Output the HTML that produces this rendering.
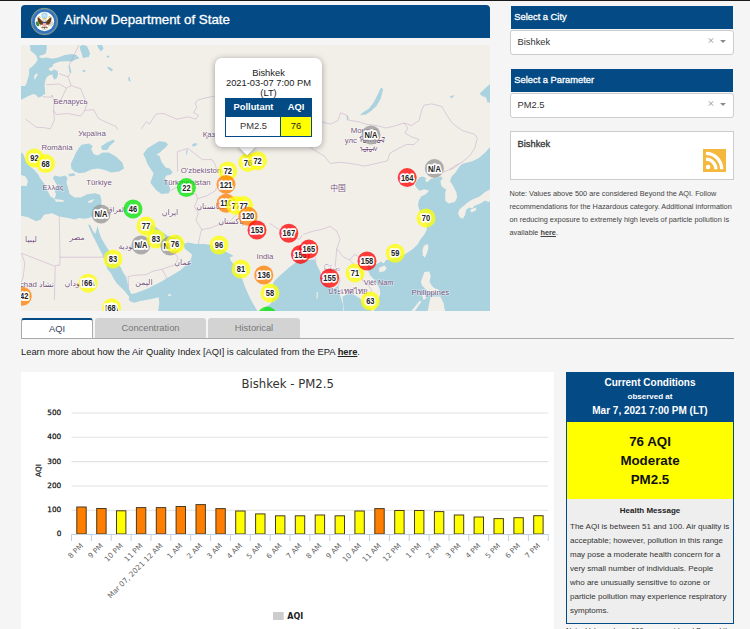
<!DOCTYPE html>
<html><head><meta charset="utf-8"><title>AirNow Department of State</title>
<style>
*{box-sizing:border-box;margin:0;padding:0}
html,body{width:750px;height:629px;overflow:hidden;background:#f5f5f5;font-family:"Liberation Sans",Arial,sans-serif;color:#222}
.abs{position:absolute}
#topline{left:0;top:0;width:750px;height:1px;background:#1a1a1a}
#rightbg{left:508px;top:1px;width:242px;height:360px;background:#f7f7f7}
#hdr{left:21px;top:5px;width:469px;height:33px;background:#044a85;border-radius:4px 4px 0 0}
#hdr .t{left:43px;top:6px;font-size:13.33px;line-height:17px;color:#fff;white-space:nowrap;position:absolute;-webkit-text-stroke:.3px #fff}
#map{left:21px;top:45px;width:469px;height:266px;background:#f2efe9;overflow:hidden}
.sh{left:511px;width:222px;height:23px;background:#044a85;color:#fff;font-size:9.33px;line-height:23px;padding-left:3.3px;-webkit-text-stroke:.3px #fff}
.dd{left:510px;width:223.5px;height:24.5px;background:#fff;border:1px solid #ccc;border-radius:3px;font-size:9.33px;line-height:22px;padding-left:6.5px;color:#333}
.tab{top:318px;height:21px;font-size:9.33px;line-height:20px;text-align:center;color:#777;background:#d3d3d3;border-radius:3px 3px 0 0}
.note{left:509.5px;top:187px;width:230px;font-size:7.33px;line-height:13px;color:#444}
#popup{left:215px;top:58px;width:107px;height:89px;background:#fff;border-radius:7px;box-shadow:0 1px 6px rgba(0,0,0,.35)}
#popup .tx{left:0;width:107px;text-align:center;font-size:9.33px;line-height:9.9px;color:#222;top:10.7px}
#tip{left:241px;top:141px;width:12px;height:12px;background:#fff;transform:rotate(45deg);box-shadow:1px 1px 4px rgba(0,0,0,.3)}
#ptab{left:10px;top:40px;width:87px;height:39px;border:1px solid #044a85;background:#fff}
</style></head><body>
<div class="abs" id="topline"></div>
<div class="abs" id="hdr"><svg class="abs" style="left:9px;top:2px" width="29" height="29" viewBox="-14.5 -14.5 29 29">
<circle r="13.5" fill="#3273bb"/><circle r="13.2" fill="none" stroke="#b9b25e" stroke-width=".7"/><circle r="12.1" fill="none" stroke="#8fb0d8" stroke-width=".5" stroke-dasharray=".8 .8"/>
<circle r="9.7" fill="#fdfdfb"/>
<circle cx="0" cy="-6" r="3.1" fill="#a9d5ec"/><circle cx="0" cy="-6" r="1.6" fill="#c9e6f5"/>
<path d="M-1.2,0.5 C-3,-1 -4.5,-3.5 -6.8,-4.6 C-7.2,-2 -6.6,0.6 -5,2.4 C-4,3.4 -2.6,3.6 -1.4,3 Z" fill="#6a3c14"/>
<path d="M1.2,0.5 C3,-1 4.5,-3.5 6.8,-4.6 C7.2,-2 6.6,0.6 5,2.4 C4,3.4 2.6,3.6 1.4,3 Z" fill="#6a3c14"/>
<path d="M-6.3,-4.8 L-4.6,-5.6 L-3.6,-3.6 Z M6.3,-4.8 L4.6,-5.6 L3.6,-3.6 Z" fill="#d6c04a"/>
<path d="M-1.6,-1.2 Q0,-3.6 1.6,-1.2 L1.2,0.6 L-1.2,0.6 Z" fill="#f3efe6" stroke="#8a6a40" stroke-width=".3"/>
<path d="M-2.6,-2.4 Q0,-3.8 2.6,-2.4" fill="none" stroke="#d6c04a" stroke-width=".7"/>
<rect x="-1.9" y="0.4" width="3.8" height="1.5" fill="#2f4fa0"/>
<path d="M-1.9,1.9 H1.9 V3.6 Q1.9,5 0,5.6 Q-1.9,5 -1.9,3.6 Z" fill="#ee7b7b"/>
<path d="M-1.1,1.9 V5 M-0.3,1.9 V5.5 M0.5,1.9 V5.4 M1.3,1.9 V4.9" stroke="#fff" stroke-width=".35"/>
<path d="M-2,5 L-3.6,6.6 L-1,6 L0,7.4 L1,6 L3.6,6.6 L2,5 Q0,6.4 -2,5Z" fill="#5a3412"/>
<ellipse cx="-7" cy="2.3" rx="1.5" ry="2.6" transform="rotate(-25 -7 2.3)" fill="#3f8a45"/>
<path d="M5.4,4.4 L8.6,0.4 M6.2,4.9 L9,1.6 M4.8,3.6 L7.8,-0.2" stroke="#a9a9a9" stroke-width=".6"/>
<path d="M-3.6,4.6 L-5.2,3.4 M3.6,4.6 L5.2,3.4" stroke="#c9a93a" stroke-width=".8"/>
<path d="M-3.2,7.2 Q0,8.6 3.2,7.2" fill="none" stroke="#c8c8c8" stroke-width=".9"/>
</svg><span class="t">AirNow Department of State</span></div>
<div class="abs" id="map"><svg width="469" height="266" viewBox="21 45 469 266" style="position:absolute;left:0;top:0">
<style>.w{fill:#aad3df}.l{fill:#f2efe9}.b{fill:none;stroke:#b58fbe;stroke-opacity:.55;stroke-width:.7}.cl{fill:#663d70;fill-opacity:.9;text-anchor:middle;font-family:"Liberation Sans","DejaVu Sans","Noto Sans CJK SC",sans-serif;stroke:#fff;stroke-width:1.2;stroke-opacity:.55;paint-order:stroke}.ml{font:bold 7.5px "Liberation Sans",Arial,sans-serif;fill:#222;text-anchor:middle;stroke:#fff;stroke-width:3;stroke-linejoin:round;paint-order:stroke}</style>
<g filter="url(#mb)">
<path class="w" d="M30,44.5 L46.7,44.5 L46.7,49.7 L45.7,53.5 L42.9,55 L40,55.4 L39.1,56.9 L41.9,58.3 L46.7,57.4 L52.4,58.8 L58.1,57.4 L64.8,55 L71.5,54 L76.3,55 L79.6,58.3 L76.3,59.3 L72,61.6 L65.8,61.2 L60.1,61.6 L55.3,63.1 L52.9,64.5 L52.4,66.9 L49.6,67.4 L48.6,69.7 L51.5,71.2 L54.3,69.3 L57.7,71.2 L58.1,74.5 L56.7,78.3 L54.3,79.8 L52.9,76.9 L52.4,74.5 L48.6,75.5 L46.2,77.9 L45,82.1 L44.6,86 L45,90.7 L45.3,93.6 L40.5,96.9 L38.1,97.4 L36.2,95 L33.4,94.1 L28.6,96 L23.8,98.4 L20,100.3 L20,86 L25.2,86 L26.7,83.1 L27.6,79.3 L29.1,74.5 L29.1,68.8 L32.4,66.4 L35.7,63.1 L37.6,59.7 L36.2,55.4 L33.4,53.1 L30.5,50.7Z"/>
<path class="l" d="M34.3,75.5 L37.2,73.1 L37.7,74.5 L35.7,78.3 L34.3,79.8Z"/>
<path class="w" d="M79.6,46.9 L82,44.5 L86.8,46.1 L88.7,49.7 L90.1,53.5 L88.7,56.9 L84.8,57.4 L82.9,58.3 L82,54.5 L80.6,50.7Z"/>
<path class="w" d="M68.6,65.9 L69.8,65.5 L71.5,72.6 L70.4,73.6 L69.1,70.7Z"/>
<path class="w" d="M82.5,70.2 L85.3,69.7 L85.6,71.7 L82.9,72.1Z"/>
<path class="w" d="M96.8,44.8 L102.4,45.3 L103.5,48.8 L100.8,51.5 L98.4,48Z"/>
<path class="w" d="M106.4,56 L109,55.5 L109.4,57.3 L107.2,57.8Z"/>
<path class="w" d="M107.2,66.4 L109.6,67.2 L113.1,69.6 L111.2,71.4 L108,68.8Z"/>
<path class="w" d="M128,77.6 L129.6,77 L130.6,81.6 L128.8,81.3Z"/>
<path class="w" d="M76,152.4 L79.2,147.6 L81.6,144.7 L88.8,143.6 L92.8,146 L91.2,148.9 L93.6,154 L97.6,155.6 L102.4,152.4 L108.8,152.4 L116,156.4 L122.4,162.8 L124,168.4 L119.2,171.6 L111.2,172.4 L104.8,170 L98.4,168.4 L92,169.2 L84.8,172.4 L79.2,173.2 L74.4,171.6 L71.2,168.4 L70.9,163.6 L73.6,158Z"/>
<path class="w" d="M100.8,146.8 L106.4,142.8 L113.6,139.6 L114.7,141.5 L109.6,146 L107.2,150 L102.4,150Z"/>
<path class="w" d="M68,174 L74.4,173.2 L75.2,175.6 L69.6,176.4Z"/>
<path class="w" d="M21,152.4 L23.2,154 L25.6,160.4 L29.6,166 L34.4,170 L38.4,174.8 L40,178 L42.4,181.2 L44.8,184.4 L47.2,190 L50.4,196.4 L54.4,198.8 L56,194.8 L54.4,189.2 L57.6,186.3 L55.2,182 L52.8,178 L54.4,175.6 L60,176.7 L65.6,175.6 L67.5,178 L66.4,182.8 L68,187.6 L69.6,194 L74.4,197.5 L80.8,197.5 L87.2,194.3 L95.2,193.2 L100,194.8 L101.6,200.4 L100.8,206.8 L99.2,213.2 L97.6,219.9 L95.2,213 L92.8,216.4 L88.8,218 L84,218.8 L79.2,218 L74.4,219.6 L68,218 L59.2,216.4 L52,213.2 L44,214.8 L40.8,219.6 L36,221.2 L28,217.2 L20,215.6 L20,186 L24,185.7 L26.4,186.3 L28,181.2 L25.6,176.4 L20,174.5Z"/>
<path class="l" d="M54.4,199.1 L63.2,200.1 L64,201.7 L56,201.8Z"/>
<path class="l" d="M88,201.2 L94.4,199.1 L92,202.3 L88.8,203Z"/>
<path class="w" d="M143.2,154 L147.2,148.4 L153.6,144.4 L159.2,141.2 L165.6,142 L168,144.4 L165.6,147.6 L162.4,150 L160,152.4 L156,154.8 L159.2,155.6 L161.6,162 L165.6,167.6 L169.6,168.4 L172.8,172.4 L170.4,174.8 L166.4,175.6 L164.8,178 L168,182.8 L170.4,189.2 L168.8,193.2 L161.6,194 L156.8,190.8 L152.8,186 L150.4,182.8 L152,178 L153.6,173.2 L150.4,168.4 L147.2,163.6 L145.6,158.8Z"/>
<path class="w" d="M192,144.4 L195.2,143.1 L197.6,144 L195.2,146 L192.8,146.8Z"/>
<path class="w" d="M186.4,150 L187.7,149.2 L187.2,154 L186,154.8Z"/>
<path class="w" d="M382,87.5 L383,90 L380.5,99 L376.5,106 L371,111 L366,114.5 L360,115.3 L362.5,112.8 L368.8,108.8 L373.6,102.4 L378,94 L380.5,88.5Z"/>
<path class="w" d="M449.7,96 L454.8,95.2 L451.6,98.4Z"/>
<path class="w" d="M346.5,115.6 L347.6,115.4 L348,120.6 L347,120.8Z"/>
<path class="w" d="M146.2,222.9 L149,222.5 L152,225 L156.8,227.7 L162,232 L168,236 L172.3,237.4 L175,235.5 L177.6,234.9 L180,238 L183.5,242 L183.5,245 L178.5,241 L176.5,240.7 L173.9,242.9 L170.4,246.2 L165,247 L160,245.5 L157,246 L156.8,243 L158.3,239.4 L156.5,240 L154.1,238.2 L152,234 L149,229 L146.5,226Z"/>
<path class="w" d="M88,224.4 L90.4,225.2 L92.8,230.8 L95.2,234 L96.8,229.2 L97.6,226 L99.2,232.4 L101.6,238.8 L106.4,246.8 L109.6,251.6 L116,262 L120.7,267.3 L123.3,272.7 L126,276.7 L127.3,282 L128.7,288.7 L131.3,294 L135.3,293.3 L140.7,291.3 L147.3,288.7 L154,285.3 L160.7,282 L166,278.7 L172,275.2 L180,270.4 L185.6,265.6 L191.2,258.4 L192,254.4 L188,251.2 L184.8,248.8 L183.2,244 L188,242.4 L196,244 L204,244 L210.4,244.8 L220,247.2 L226.4,252 L231.2,254.4 L233.6,256 L229.6,257.6 L231.2,261.6 L234.4,264.8 L242.4,279.2 L244.7,286 L247.3,292 L250,298 L252.7,303 L255.3,307.5 L258,312 L158,312 L159.3,303.3 L158.7,297.3 L152.7,298.7 L146,300 L139.3,301.3 L134,302.7 L130,301.3 L128.7,299.3 L129.3,296.7 L128,295.3 L124.7,291.3 L120.7,287.3 L116.7,283.3 L114,279.3 L111.3,274 L107.3,268.7 L104,258 L100,250 L96.8,243.6 L93.6,237.2 L90.4,230.8Z"/>
<path class="l" d="M168,294.4 L171.2,294.4 L171.2,295.8 L168,295.8Z"/>
<path class="w" d="M262.7,312 L265.3,307.3 L269.3,304.7 L272,302 L272,290 L273.3,282.7 L275.3,280 L278.7,276.7 L284,272 L289.3,267.3 L294.7,263.3 L300,258 L308,260 L314.4,259.2 L316,262.4 L317.6,266.4 L320,271.2 L321.6,276 L324,282.4 L330.4,287.2 L333.6,288.8 L338.4,285.6 L339.2,290.4 L340,295.2 L341.6,300 L343.2,304.8 L343.5,312Z"/>
<path class="l" d="M316.8,292 L317.9,292 L317.6,298.4 L316.5,298.4Z"/>
<path class="w" d="M344.3,312 L343.2,303.2 L342.4,296.8 L346.4,294.4 L352,293.6 L356,296 L360,298.4 L363.2,302.4 L366.4,306.4 L370.4,308 L372,312Z"/>
<path class="w" d="M491.6,145.2 L485.2,152.4 L478.8,158 L472.4,161.2 L466,162.8 L461.2,164.4 L458,168.4 L455.6,172.4 L451.6,176.4 L450,181.2 L453.2,186 L456.4,192.4 L457.2,197.2 L454.8,202 L448.4,203.6 L445.2,200.4 L445.2,194 L446,189.2 L442.8,187.6 L441.2,185.2 L440.4,181.2 L442.8,178 L440.4,176.4 L435.6,178 L430.8,178.8 L427.6,182 L425.2,181.2 L426,178 L422.8,176.4 L419.6,177.2 L416.4,181.2 L414.8,185.2 L417.2,188.4 L419.6,190.8 L424.4,189.2 L429.2,190.8 L426,194 L421.2,196.4 L418.8,200.4 L418,205.2 L419.6,210 L421.2,214.8 L425.2,219.9 L426.8,221.6 L426.8,229.6 L424.4,234.4 L420.4,239.2 L418,244 L413.2,248.8 L408.4,252 L404.4,254.4 L395.6,258.4 L386,260 L383.6,263.5 L381.2,261.6 L378,263.2 L374.8,264.8 L370,263.2 L366.8,266.4 L368.4,271.2 L370,275.2 L373.2,278.4 L377.2,284 L379.6,288.8 L380.4,293.6 L378.8,298.4 L376.4,306.4 L373.2,312 L491.6,312Z"/>
<path class="l" d="M491.6,188.4 L485.2,192.1 L478.8,196.9 L472.4,199.6 L468.4,202 L464.4,205.2 L459.6,209.2 L458,213.2 L459.6,217.2 L462.8,218.8 L465.2,214.8 L466,210 L469.2,207.6 L472.4,208.4 L474,206 L480.4,203.6 L485.2,200.4 L488.4,202 L491.6,200.4Z"/>
<path class="l" d="M470,210 L475.6,207.6 L476.4,210 L471.6,212.4Z"/>
<path class="l" d="M378.8,268 L384.4,265.6 L386.8,268 L384.4,271.2 L379.6,272.2Z"/>
<path class="l" d="M425.2,244.8 L427.9,244.3 L428.4,248 L426.8,253.6 L424.7,257.8 L422.8,255.2 L422.5,250.4 L423.6,246.4Z"/>
<path class="l" d="M424.4,272 L429.2,271.5 L430.8,276 L429.5,281.6 L431.6,285.6 L434,288 L438,289.6 L440.4,292 L438,293.6 L433.2,292 L428.4,291.2 L425.2,288.8 L422,285.6 L420.9,281.6 L422.5,277.6Z"/>
<path class="l" d="M430.8,296.8 L440.4,296.5 L443.6,303.2 L445.2,312 L427.6,312 L429.2,303.2Z"/>
<path class="l" d="M422,295.2 L425.2,294.4 L426,298.4 L423.6,300Z"/>
<path class="l" d="M419.6,300.8 L421.5,301.6 L415.6,309.9 L413.2,312 L410.8,312Z"/>
<path class="w" d="M491,83 L479.6,93.6 L482,96 L486,97.6 L487.6,102.4 L491,102.4Z"/>
<path class="b" d="M141.3,128.8 L146.4,121.6 L149.6,124 L156,113.9 L164,113.6 L176.8,119.2 L188,116.8 L196,119.2 L198.4,115.2 L193.6,112.8 L196.8,107.2 L195.2,103.2 L197.6,100 L207.2,97.6 L214.9,96"/>
<path class="b" d="M442.8,172.4 L448.4,170 L453.2,168.4 L458.8,164.4"/>
<path class="b" d="M79.2,44.8 L75.2,52.8 L71.2,60.8 L68.8,66.4"/>
<path class="b" d="M69.9,73.6 L68,76.8 L59.2,73.6"/>
<path class="b" d="M68,76.8 L71.2,85.6 L66.4,88 L59.2,84 L46.4,84.8"/>
<path class="b" d="M71.2,85.6 L80.8,88.8 L83.2,95.2 L87.2,103.2 L84.8,110.4 L93.6,109.6 L98.4,118.4 L106.4,122.4 L116,126.4 L117.6,129.9"/>
<path class="b" d="M66.4,88 L63.2,95.2 L60.8,100 L54.4,101.6 L53.6,110.4 L56,114.4 L68,113.6 L80.8,116 L84.8,110.4"/>
<path class="b" d="M42.4,96.8 L51.2,97.1 L52,95.2 L54.4,101.6"/>
<path class="b" d="M53.6,110.4 L54.4,120 L50.4,128.8"/>
<path class="b" d="M25.6,119.2 L31.2,123.2 L36,127.2 L44,127.7 L50.4,128.8"/>
<path class="b" d="M59.2,216.4 L60,257.2 L104.8,257.2"/>
<path class="b" d="M60,257.2 L59.7,265.2 L55.2,265.5 L54.4,299.9"/>
<path class="b" d="M21.3,253.2 L54.4,266"/>
<path class="b" d="M21.3,253.2 L24.8,262.8 L23.2,277.2 L21.3,282"/>
<path class="b" d="M128.7,288.7 L128,276.7 L134,275.3 L146,274.7 L152.7,271.3 L162,269.3 L167.3,278.7"/>
<path class="b" d="M162,269.3 L175.3,264.7 L178,258 L175.3,254"/>
<path class="b" d="M177.6,171.6 L177.3,151.6 L188,148.4 L202.4,159.6 L212,159.6 L215.2,164.4 L216.8,170 L220,170.8"/>
<path class="b" d="M170.4,190.8 L177.6,186.8 L188,193.2 L196,194 L197.6,198.8 L207.2,195.6 L215.2,190.8 L216.8,187.6"/>
<path class="b" d="M197.6,198.8 L194.4,206.8 L198.4,213.2 L196,219.9"/>
<path class="b" d="M196,220 L201.6,229.6 L199.2,239.2 L198.4,244"/>
<path class="b" d="M201.6,229.6 L210.4,228 L218.4,224.8 L229.6,221.6 L236,215.2"/>
<path class="b" d="M269.6,223.2 L279.2,229.6 L290.4,237.6 L300,239.2 L301.9,235.2"/>
<path class="b" d="M303.2,234.4 L312.8,231.2 L320.8,229.6 L330.4,226.4 L336.8,231.2 L340,239.2 L336.8,248.8 L343.2,256.8 L349.6,260 L354.4,254.4 L359.2,256.8"/>
<path class="b" d="M316,262.4 L315.2,256.8 L312.8,253.6 L316,248.8 L311.2,245.6 L308,244 L303.2,242.4"/>
<path class="b" d="M336.8,248.8 L335.2,266.4 L336.8,271.2 L340,280.8 L338.4,285.6"/>
<path class="b" d="M349.6,260 L356,266.4 L362.4,272.8 L362.4,280.8 L367.2,284 L372,290.4 L368.8,295.2"/>
<path class="b" d="M310.1,121.7 L321.5,121.7 L330.4,124.2 L338,120.4 L340.5,112.8 L346.9,115.3 L349.4,120.4 L358.3,121.7 L365.9,124.2 L376,125.5 L386.1,128 L396.3,125.5 L403.9,122.9 L411.5,125.5 L419.1,120.4 L421.6,110.3 L424.1,105.2 L431.7,103.9 L441.9,106.5 L446.9,115.3 L452,122.9 L462.1,130.5 L474.8,134.3 L477.3,138.1 L474.8,148.3 L469.7,155.9 L462.1,162.2 L454.5,166 L449.5,169.8"/>
<path class="b" d="M403.9,122.9 L407.7,128 L405.1,133.1 L411.5,136.9 L419.1,139.4 L414,144.5 L406.4,144.5 L398.8,148.3 L389.9,153.3 L387.4,160.9 L376,163.5 L364.6,166 L350.7,163.5 L339.3,162.2 L330.4,163.5 L324.1,155.9 L315.2,150.8 L310.1,147 L302.5,144.5 L294.9,138.1 L289.9,128"/>
<path class="b" d="M310.1,121.7 L302.5,116.6 L292.4,114.1 L284.8,117.9 L274.7,116.6"/>
</g>
<defs><filter id="mb" x="0" y="0" width="100%" height="100%"><feGaussianBlur stdDeviation="0.35"/></filter></defs>
<text class="cl" x="70.5" y="103.5" font-size="7.8">Беларусь</text>
<text class="cl" x="92" y="135.5" font-size="7.8">Україна</text>
<text class="cl" x="57" y="150" font-size="7.8">România</text>
<text class="cl" x="53" y="190" font-size="7.8">Ελλάς</text>
<text class="cl" x="99" y="185" font-size="7.8">Türkiye</text>
<text class="cl" x="209" y="137" font-size="7.8">Қаз</text>
<text class="cl" x="201" y="173" font-size="7.8">O'zbekiston</text>
<text class="cl" x="187" y="184.5" font-size="7.8">Türkmenistan</text>
<text class="cl" x="170" y="215" font-size="7.8">ایران</text>
<text class="cl" x="77" y="240" font-size="7.8">مصر</text>
<text class="cl" x="31" y="242" font-size="7.8">ليبيا</text>
<text class="cl" x="133" y="249" font-size="7.8">السعودية</text>
<text class="cl" x="183" y="265" font-size="7.8">عمان</text>
<text class="cl" x="144" y="285" font-size="7.8">اليمن</text>
<text class="cl" x="35" y="287" font-size="7.8">Tchad تشاد</text>
<text class="cl" x="78" y="286" font-size="7.8">السودان</text>
<text class="cl" x="212" y="209" font-size="7.8">افغانستان</text>
<text class="cl" x="231" y="224" font-size="7.8">پاکستان</text>
<text class="cl" x="116.4" y="212" font-size="7">العراق</text>
<text class="cl" x="265" y="258.5" font-size="7.8">India</text>
<text class="cl" x="338" y="191" font-size="7.8">中国</text>
<text class="cl" x="364" y="133" font-size="7.8">Монгол</text>
<text class="cl" x="365" y="143" font-size="7.8">улс ᠮᠣᠩᠭᠣᠯ</text>
<text class="cl" x="369" y="152" font-size="6.5">ᠤᠯᠤᠰ</text>
<text class="cl" x="378.5" y="285" font-size="7.2">Việt Nam</text>
<text class="cl" x="348" y="294" font-size="7.8">ประเทศไทย</text>
<text class="cl" x="430.3" y="295" font-size="7.8">Philippines</text>
<text class="cl" x="332" y="271" font-size="7">မြန်မာ</text>
<circle cx="34.4" cy="158" r="9.5" fill="#ffff00" fill-opacity=".75"/>
<text class="ml" transform="translate(34.4,161.1) scale(1,1.16)">92</text>
<circle cx="45.6" cy="163.6" r="9.5" fill="#ffff00" fill-opacity=".75"/>
<text class="ml" transform="translate(45.6,166.7) scale(1,1.16)">68</text>
<circle cx="101" cy="214" r="9.5" fill="#969696" fill-opacity=".75"/>
<text class="ml" transform="translate(101,217.1) scale(1,1.16)">N/A</text>
<circle cx="133" cy="209" r="9.5" fill="#00e400" fill-opacity=".75"/>
<text class="ml" transform="translate(133,212.1) scale(1,1.16)">46</text>
<circle cx="146" cy="226" r="9.5" fill="#ffff00" fill-opacity=".75"/>
<text class="ml" transform="translate(146,229.1) scale(1,1.16)">77</text>
<circle cx="141" cy="245" r="9.5" fill="#969696" fill-opacity=".75"/>
<text class="ml" transform="translate(141,248.1) scale(1,1.16)">N/A</text>
<circle cx="156" cy="239" r="9.5" fill="#ffff00" fill-opacity=".75"/>
<text class="ml" transform="translate(156,242.1) scale(1,1.16)">83</text>
<circle cx="170" cy="246" r="9.5" fill="#969696" fill-opacity=".75"/>
<text class="ml" transform="translate(170,249.1) scale(1,1.16)">N/A</text>
<circle cx="175" cy="244" r="9.5" fill="#ffff00" fill-opacity=".75"/>
<text class="ml" transform="translate(175,247.1) scale(1,1.16)">76</text>
<circle cx="113" cy="259" r="9.5" fill="#ffff00" fill-opacity=".75"/>
<text class="ml" transform="translate(113,262.1) scale(1,1.16)">83</text>
<circle cx="88.2" cy="283.2" r="9.5" fill="#ffff00" fill-opacity=".75"/>
<text class="ml" transform="translate(88.2,286.3) scale(1,1.16)">N/A</text>
<text class="ml" transform="translate(88.2,286.3) scale(1,1.16)">66</text>
<circle cx="22.2" cy="296.3" r="9.5" fill="#ff7e00" fill-opacity=".75"/>
<text class="ml" transform="translate(22.2,299.40000000000003) scale(1,1.16)">142</text>
<circle cx="111.6" cy="307.7" r="9.5" fill="#ffff00" fill-opacity=".75"/>
<text class="ml" transform="translate(111.6,310.8) scale(1,1.16)">N/A</text>
<text class="ml" transform="translate(111.6,310.8) scale(1,1.16)">68</text>
<circle cx="186.4" cy="187.6" r="9.5" fill="#00e400" fill-opacity=".75"/>
<text class="ml" transform="translate(186.4,190.7) scale(1,1.16)">22</text>
<circle cx="247.9" cy="162.4" r="9.5" fill="#ffff00" fill-opacity=".75"/>
<text class="ml" transform="translate(247.9,165.5) scale(1,1.16)">76</text>
<circle cx="257.6" cy="160.8" r="9.5" fill="#ffff00" fill-opacity=".75"/>
<text class="ml" transform="translate(257.6,163.9) scale(1,1.16)">72</text>
<circle cx="227.8" cy="171" r="9.5" fill="#ffff00" fill-opacity=".75"/>
<text class="ml" transform="translate(227.8,174.1) scale(1,1.16)">72</text>
<circle cx="226" cy="184.4" r="9.5" fill="#ff7e00" fill-opacity=".75"/>
<text class="ml" transform="translate(226,187.5) scale(1,1.16)">121</text>
<circle cx="226.2" cy="203.2" r="9.5" fill="#ff7e00" fill-opacity=".75"/>
<text class="ml" transform="translate(226.2,206.29999999999998) scale(1,1.16)">110</text>
<circle cx="235.8" cy="205.4" r="9.5" fill="#ffff00" fill-opacity=".75"/>
<text class="ml" transform="translate(235.8,208.5) scale(1,1.16)">77</text>
<circle cx="243.6" cy="205.6" r="9.5" fill="#ffff00" fill-opacity=".75"/>
<text class="ml" transform="translate(243.6,208.7) scale(1,1.16)">77</text>
<circle cx="248" cy="216.2" r="9.5" fill="#ff7e00" fill-opacity=".75"/>
<text class="ml" transform="translate(248,219.29999999999998) scale(1,1.16)">120</text>
<circle cx="257" cy="230" r="9.5" fill="#ff0000" fill-opacity=".75"/>
<text class="ml" transform="translate(257,233.1) scale(1,1.16)">153</text>
<circle cx="219" cy="245" r="9.5" fill="#ffff00" fill-opacity=".75"/>
<text class="ml" transform="translate(219,248.1) scale(1,1.16)">96</text>
<circle cx="241" cy="269" r="9.5" fill="#ffff00" fill-opacity=".75"/>
<text class="ml" transform="translate(241,272.1) scale(1,1.16)">81</text>
<circle cx="263.8" cy="275" r="9.5" fill="#ff7e00" fill-opacity=".75"/>
<text class="ml" transform="translate(263.8,278.1) scale(1,1.16)">136</text>
<circle cx="270" cy="293" r="9.5" fill="#ffff00" fill-opacity=".75"/>
<text class="ml" transform="translate(270,296.1) scale(1,1.16)">58</text>
<circle cx="267.2" cy="316" r="9.5" fill="#00e400" fill-opacity=".75"/>
<circle cx="288.8" cy="233.3" r="9.5" fill="#ff0000" fill-opacity=".75"/>
<text class="ml" transform="translate(288.8,236.4) scale(1,1.16)">167</text>
<circle cx="300.5" cy="254.4" r="9.5" fill="#ff0000" fill-opacity=".75"/>
<text class="ml" transform="translate(300.5,257.5) scale(1,1.16)">155</text>
<circle cx="308.8" cy="249.1" r="9.5" fill="#ff0000" fill-opacity=".75"/>
<text class="ml" transform="translate(308.8,252.2) scale(1,1.16)">165</text>
<circle cx="329.6" cy="278.3" r="9.5" fill="#ff0000" fill-opacity=".75"/>
<text class="ml" transform="translate(329.6,281.40000000000003) scale(1,1.16)">155</text>
<circle cx="355" cy="273" r="9.5" fill="#ffff00" fill-opacity=".75"/>
<text class="ml" transform="translate(355,276.1) scale(1,1.16)">71</text>
<circle cx="367" cy="261" r="9.5" fill="#ff0000" fill-opacity=".75"/>
<text class="ml" transform="translate(367,264.1) scale(1,1.16)">158</text>
<circle cx="395.2" cy="253.2" r="9.5" fill="#ffff00" fill-opacity=".75"/>
<text class="ml" transform="translate(395.2,256.3) scale(1,1.16)">59</text>
<circle cx="370.3" cy="301" r="9.5" fill="#ffff00" fill-opacity=".75"/>
<text class="ml" transform="translate(370.3,304.1) scale(1,1.16)">63</text>
<circle cx="426" cy="218" r="9.5" fill="#ffff00" fill-opacity=".75"/>
<text class="ml" transform="translate(426,221.1) scale(1,1.16)">70</text>
<circle cx="407.2" cy="177.6" r="9.5" fill="#ff0000" fill-opacity=".75"/>
<text class="ml" transform="translate(407.2,180.7) scale(1,1.16)">164</text>
<circle cx="434.4" cy="168.4" r="9.5" fill="#969696" fill-opacity=".75"/>
<text class="ml" transform="translate(434.4,171.5) scale(1,1.16)">N/A</text>
<circle cx="371" cy="135" r="9.5" fill="#969696" fill-opacity=".75"/>
<text class="ml" transform="translate(371,138.1) scale(1,1.16)">N/A</text>
</svg></div>
<div class="abs" id="tip"></div>
<div class="abs" id="popup">
 <div class="abs tx">Bishkek<br>2021-03-07 7:00 PM<br>(LT)</div>
 <div class="abs" id="ptab">
  <div class="abs" style="left:0;top:0;width:85px;height:18px;background:#044a85"></div>
  <div class="abs" style="left:54px;top:18px;width:31px;height:19px;background:#ffff00;border-left:1px solid #044a85"></div>
  <div class="abs" style="left:0;top:3px;width:55px;text-align:center;font-size:9.33px;line-height:10px;font-weight:bold;color:#fff">Pollutant</div>
  <div class="abs" style="left:55px;top:3px;width:30px;text-align:center;font-size:9.33px;line-height:10px;font-weight:bold;color:#fff">AQI</div>
  <div class="abs" style="left:0;top:21.8px;width:55px;text-align:center;font-size:9.33px;line-height:10px;color:#333">PM2.5</div>
  <div class="abs" style="left:55px;top:21.8px;width:30px;text-align:center;font-size:9.33px;line-height:10px;color:#222">76</div>
 </div>
</div>

<div class="abs sh" style="top:6px">Select a City</div>
<div class="abs dd" style="top:30.4px">Bishkek</div>
<div class="abs sh" style="top:69px;line-height:23.6px">Select a Parameter</div>
<div class="abs dd" style="top:93.4px">PM2.5</div>
<svg class="abs" style="left:705px;top:35px" width="25" height="12"><path d="M3.8,3.3 L8.2,7.7 M8.2,3.3 L3.8,7.7" stroke="#999" stroke-width="1" fill="none"/><path d="M15.1,5 L20.9,5 L18,8 Z" fill="#888"/></svg>
<svg class="abs" style="left:705px;top:98px" width="25" height="12"><path d="M3.8,3.3 L8.2,7.7 M8.2,3.3 L3.8,7.7" stroke="#999" stroke-width="1" fill="none"/><path d="M15.1,5 L20.9,5 L18,8 Z" fill="#888"/></svg>

<div class="abs" style="left:510px;top:131px;width:223.5px;height:49px;background:#fff;border:1px solid #ccc"></div>
<div class="abs" style="left:517.5px;top:137.6px;font-size:9.33px;line-height:13px;color:#333;-webkit-text-stroke:.3px #333">Bishkek</div>
<svg class="abs" style="left:703px;top:149px" width="23" height="23" viewBox="0 0 23 23"><rect width="23" height="23" fill="#f4b83f"/><circle cx="5.1" cy="18" r="2.3" fill="#fff"/><path d="M2.9,10.2 A10,10 0 0 1 12.9,20.2 M2.9,4.4 A15.8,15.8 0 0 1 18.7,20.2" stroke="#fff" stroke-width="3.3" fill="none"/></svg>
<div class="abs note">Note: Values above 500 are considered Beyond the AQI. Follow recommendations for the Hazardous category. Additional information on reducing exposure to extremely high levels of particle pollution is available <b style="text-decoration:underline">here</b>.</div>

<div class="abs" style="left:21px;top:338px;width:713px;height:1px;background:#aaa"></div>
<div class="abs tab" style="left:21px;width:72px;background:#fff;color:#044a85;border:1px solid #aaa;border-top:2px solid #044a85;border-bottom:none;line-height:19.5px;height:20px;color:#2f3f5c">AQI</div>
<div class="abs tab" style="left:95px;width:111px;height:20px;line-height:21.5px">Concentration</div>
<div class="abs tab" style="left:208px;width:92px;height:20px;line-height:21.5px">Historical</div>

<div class="abs" style="left:21px;top:346px;font-size:9.33px;line-height:12px;color:#222;white-space:nowrap">Learn more about how the Air Quality Index [AQI] is calculated from the EPA <b style="text-decoration:underline">here</b>.</div>

<div class="abs" id="chart" style="left:21px;top:372px;width:533px;height:257px;background:#fff"><svg width="533" height="257" viewBox="21 372 533 257" style="position:absolute;left:0;top:0;font-family:'DejaVu Sans',Verdana,sans-serif">
<path d="M71.5,510.3 H548.3" stroke="#e2e2e2" stroke-width="1.1"/>
<path d="M71.5,486 H548.3" stroke="#e2e2e2" stroke-width="1.1"/>
<path d="M71.5,461.6 H548.3" stroke="#e2e2e2" stroke-width="1.1"/>
<path d="M71.5,437.2 H548.3" stroke="#e2e2e2" stroke-width="1.1"/>
<path d="M71.5,413 H548.3" stroke="#e2e2e2" stroke-width="1.1"/>
<text x="61.3" y="512.2" text-anchor="end" font-size="7.33" fill="#111" stroke="#111" stroke-width=".25">100</text>
<text x="61.3" y="487.9" text-anchor="end" font-size="7.33" fill="#111" stroke="#111" stroke-width=".25">200</text>
<text x="61.3" y="463.5" text-anchor="end" font-size="7.33" fill="#111" stroke="#111" stroke-width=".25">300</text>
<text x="61.3" y="439.1" text-anchor="end" font-size="7.33" fill="#111" stroke="#111" stroke-width=".25">400</text>
<text x="61.3" y="414.9" text-anchor="end" font-size="7.33" fill="#111" stroke="#111" stroke-width=".25">500</text>
<text x="61.3" y="536.2" text-anchor="end" font-size="7.33" fill="#111" stroke="#111" stroke-width=".25">0</text>
<text x="287.7" y="387.5" text-anchor="middle" font-size="11.7" fill="#333">Bishkek - PM2.5</text>
<text transform="translate(41.3,470.5) rotate(-90)" text-anchor="middle" font-size="7.33" fill="#222" stroke="#222" stroke-width=".2">AQI</text>
<rect x="76.8" y="507.0" width="9.4" height="27.0" fill="#ff7e00" stroke="#4a3a20" stroke-width="1"/>
<rect x="96.7" y="508.5" width="9.4" height="25.5" fill="#ff7e00" stroke="#4a3a20" stroke-width="1"/>
<rect x="116.5" y="510.8" width="9.4" height="23.2" fill="#ffff00" stroke="#4a3a20" stroke-width="1"/>
<rect x="136.4" y="507.6" width="9.4" height="26.4" fill="#ff7e00" stroke="#4a3a20" stroke-width="1"/>
<rect x="156.3" y="507.6" width="9.4" height="26.4" fill="#ff7e00" stroke="#4a3a20" stroke-width="1"/>
<rect x="176.1" y="506.5" width="9.4" height="27.5" fill="#ff7e00" stroke="#4a3a20" stroke-width="1"/>
<rect x="196.0" y="504.6" width="9.4" height="29.4" fill="#ff7e00" stroke="#4a3a20" stroke-width="1"/>
<rect x="215.9" y="508.6" width="9.4" height="25.4" fill="#ff7e00" stroke="#4a3a20" stroke-width="1"/>
<rect x="235.7" y="511.0" width="9.4" height="23.0" fill="#ffff00" stroke="#4a3a20" stroke-width="1"/>
<rect x="255.6" y="513.9" width="9.4" height="20.1" fill="#ffff00" stroke="#4a3a20" stroke-width="1"/>
<rect x="275.5" y="515.8" width="9.4" height="18.2" fill="#ffff00" stroke="#4a3a20" stroke-width="1"/>
<rect x="295.3" y="515.8" width="9.4" height="18.2" fill="#ffff00" stroke="#4a3a20" stroke-width="1"/>
<rect x="315.2" y="515.0" width="9.4" height="19.0" fill="#ffff00" stroke="#4a3a20" stroke-width="1"/>
<rect x="335.1" y="515.8" width="9.4" height="18.2" fill="#ffff00" stroke="#4a3a20" stroke-width="1"/>
<rect x="354.9" y="511.0" width="9.4" height="23.0" fill="#ffff00" stroke="#4a3a20" stroke-width="1"/>
<rect x="374.8" y="508.6" width="9.4" height="25.4" fill="#ff7e00" stroke="#4a3a20" stroke-width="1"/>
<rect x="394.7" y="510.5" width="9.4" height="23.5" fill="#ffff00" stroke="#4a3a20" stroke-width="1"/>
<rect x="414.5" y="510.5" width="9.4" height="23.5" fill="#ffff00" stroke="#4a3a20" stroke-width="1"/>
<rect x="434.4" y="511.6" width="9.4" height="22.4" fill="#ffff00" stroke="#4a3a20" stroke-width="1"/>
<rect x="454.3" y="515.0" width="9.4" height="19.0" fill="#ffff00" stroke="#4a3a20" stroke-width="1"/>
<rect x="474.1" y="517.0" width="9.4" height="17.0" fill="#ffff00" stroke="#4a3a20" stroke-width="1"/>
<rect x="494.0" y="518.6" width="9.4" height="15.4" fill="#ffff00" stroke="#4a3a20" stroke-width="1"/>
<rect x="513.9" y="517.7" width="9.4" height="16.3" fill="#ffff00" stroke="#4a3a20" stroke-width="1"/>
<rect x="533.7" y="515.7" width="9.4" height="18.3" fill="#ffff00" stroke="#4a3a20" stroke-width="1"/>
<path d="M71.5,534.5 H548.3" stroke="#c0d0e0" stroke-width="1"/>
<path d="M71.5,534.5 v6.5" stroke="#c0d0e0" stroke-width="1"/>
<path d="M91.4,534.5 v6.5" stroke="#c0d0e0" stroke-width="1"/>
<path d="M111.2,534.5 v6.5" stroke="#c0d0e0" stroke-width="1"/>
<path d="M131.1,534.5 v6.5" stroke="#c0d0e0" stroke-width="1"/>
<path d="M151.0,534.5 v6.5" stroke="#c0d0e0" stroke-width="1"/>
<path d="M170.8,534.5 v6.5" stroke="#c0d0e0" stroke-width="1"/>
<path d="M190.7,534.5 v6.5" stroke="#c0d0e0" stroke-width="1"/>
<path d="M210.6,534.5 v6.5" stroke="#c0d0e0" stroke-width="1"/>
<path d="M230.4,534.5 v6.5" stroke="#c0d0e0" stroke-width="1"/>
<path d="M250.3,534.5 v6.5" stroke="#c0d0e0" stroke-width="1"/>
<path d="M270.2,534.5 v6.5" stroke="#c0d0e0" stroke-width="1"/>
<path d="M290.0,534.5 v6.5" stroke="#c0d0e0" stroke-width="1"/>
<path d="M309.9,534.5 v6.5" stroke="#c0d0e0" stroke-width="1"/>
<path d="M329.8,534.5 v6.5" stroke="#c0d0e0" stroke-width="1"/>
<path d="M349.6,534.5 v6.5" stroke="#c0d0e0" stroke-width="1"/>
<path d="M369.5,534.5 v6.5" stroke="#c0d0e0" stroke-width="1"/>
<path d="M389.4,534.5 v6.5" stroke="#c0d0e0" stroke-width="1"/>
<path d="M409.2,534.5 v6.5" stroke="#c0d0e0" stroke-width="1"/>
<path d="M429.1,534.5 v6.5" stroke="#c0d0e0" stroke-width="1"/>
<path d="M449.0,534.5 v6.5" stroke="#c0d0e0" stroke-width="1"/>
<path d="M468.8,534.5 v6.5" stroke="#c0d0e0" stroke-width="1"/>
<path d="M488.7,534.5 v6.5" stroke="#c0d0e0" stroke-width="1"/>
<path d="M508.6,534.5 v6.5" stroke="#c0d0e0" stroke-width="1"/>
<path d="M528.4,534.5 v6.5" stroke="#c0d0e0" stroke-width="1"/>
<path d="M548.3,534.5 v6.5" stroke="#c0d0e0" stroke-width="1"/>
<text transform="translate(83.6,546.3) rotate(-45)" text-anchor="end" font-size="7.33" fill="#666">8 PM</text>
<text transform="translate(103.5,546.3) rotate(-45)" text-anchor="end" font-size="7.33" fill="#666">9 PM</text>
<text transform="translate(123.4,546.3) rotate(-45)" text-anchor="end" font-size="7.33" fill="#666">10 PM</text>
<text transform="translate(143.2,546.3) rotate(-45)" text-anchor="end" font-size="7.33" fill="#666">11 PM</text>
<text transform="translate(163.1,546.3) rotate(-45)" text-anchor="end" font-size="7.33" fill="#666">Mar 07, 2021 12 AM</text>
<text transform="translate(183.0,546.3) rotate(-45)" text-anchor="end" font-size="7.33" fill="#666">1 AM</text>
<text transform="translate(202.8,546.3) rotate(-45)" text-anchor="end" font-size="7.33" fill="#666">2 AM</text>
<text transform="translate(222.7,546.3) rotate(-45)" text-anchor="end" font-size="7.33" fill="#666">3 AM</text>
<text transform="translate(242.6,546.3) rotate(-45)" text-anchor="end" font-size="7.33" fill="#666">4 AM</text>
<text transform="translate(262.4,546.3) rotate(-45)" text-anchor="end" font-size="7.33" fill="#666">5 AM</text>
<text transform="translate(282.3,546.3) rotate(-45)" text-anchor="end" font-size="7.33" fill="#666">6 AM</text>
<text transform="translate(302.2,546.3) rotate(-45)" text-anchor="end" font-size="7.33" fill="#666">7 AM</text>
<text transform="translate(322.0,546.3) rotate(-45)" text-anchor="end" font-size="7.33" fill="#666">8 AM</text>
<text transform="translate(341.9,546.3) rotate(-45)" text-anchor="end" font-size="7.33" fill="#666">9 AM</text>
<text transform="translate(361.8,546.3) rotate(-45)" text-anchor="end" font-size="7.33" fill="#666">10 AM</text>
<text transform="translate(381.6,546.3) rotate(-45)" text-anchor="end" font-size="7.33" fill="#666">11 AM</text>
<text transform="translate(401.5,546.3) rotate(-45)" text-anchor="end" font-size="7.33" fill="#666">12 PM</text>
<text transform="translate(421.4,546.3) rotate(-45)" text-anchor="end" font-size="7.33" fill="#666">1 PM</text>
<text transform="translate(441.2,546.3) rotate(-45)" text-anchor="end" font-size="7.33" fill="#666">2 PM</text>
<text transform="translate(461.1,546.3) rotate(-45)" text-anchor="end" font-size="7.33" fill="#666">3 PM</text>
<text transform="translate(481.0,546.3) rotate(-45)" text-anchor="end" font-size="7.33" fill="#666">4 PM</text>
<text transform="translate(500.8,546.3) rotate(-45)" text-anchor="end" font-size="7.33" fill="#666">5 PM</text>
<text transform="translate(520.7,546.3) rotate(-45)" text-anchor="end" font-size="7.33" fill="#666">6 PM</text>
<text transform="translate(540.6,546.3) rotate(-45)" text-anchor="end" font-size="7.33" fill="#666">7 PM</text>
<rect x="273" y="612" width="10.7" height="8" fill="#ccc"/>
<text x="287.3" y="619" font-size="8" font-weight="bold" fill="#222">AQI</text>
</svg></div>
<div class="abs" style="left:566px;top:372px;width:168px;height:251.5px;background:#eee;border:1px solid #044a85;border-top:none"></div>
<div class="abs" style="left:566px;top:372px;width:168px;height:50px;background:#044a85;color:#fff;text-align:center;font-weight:bold">
<div class="abs" style="left:0;width:168px;top:5px;font-size:10px;line-height:12px">Current Conditions</div>
<div class="abs" style="left:0;width:168px;top:19px;font-size:8px;line-height:12px">observed at</div>
<div class="abs" style="left:0;width:168px;top:33px;font-size:10px;line-height:12px">Mar 7, 2021 7:00 PM (LT)</div>
</div>
<div class="abs" style="left:567px;top:422px;width:166px;height:76.5px;background:#ffff00;color:#111;text-align:center;font-weight:bold;font-size:13.33px;line-height:19.3px;padding-top:9.5px">76 AQI<br>Moderate<br>PM2.5</div>
<div class="abs" style="left:566px;width:168px;top:504.5px;font-size:8px;line-height:12px;font-weight:bold;text-align:center;color:#222">Health Message</div>
<div class="abs" style="left:570px;width:164px;top:519.7px;font-size:8px;line-height:14.05px;color:#333;white-space:nowrap">The AQI is between 51 and 100. Air quality is<br>acceptable; however, pollution in this range<br>may pose a moderate health concern for a<br>very small number of individuals. People<br>who are unusually sensitive to ozone or<br>particle pollution may experience respiratory<br>symptoms.</div>
<div class="abs" style="left:566px;top:625.6px;font-size:7.33px;line-height:9px;color:#333;white-space:nowrap">Note: Values above 500 are considered Beyond the</div>

</body></html>
